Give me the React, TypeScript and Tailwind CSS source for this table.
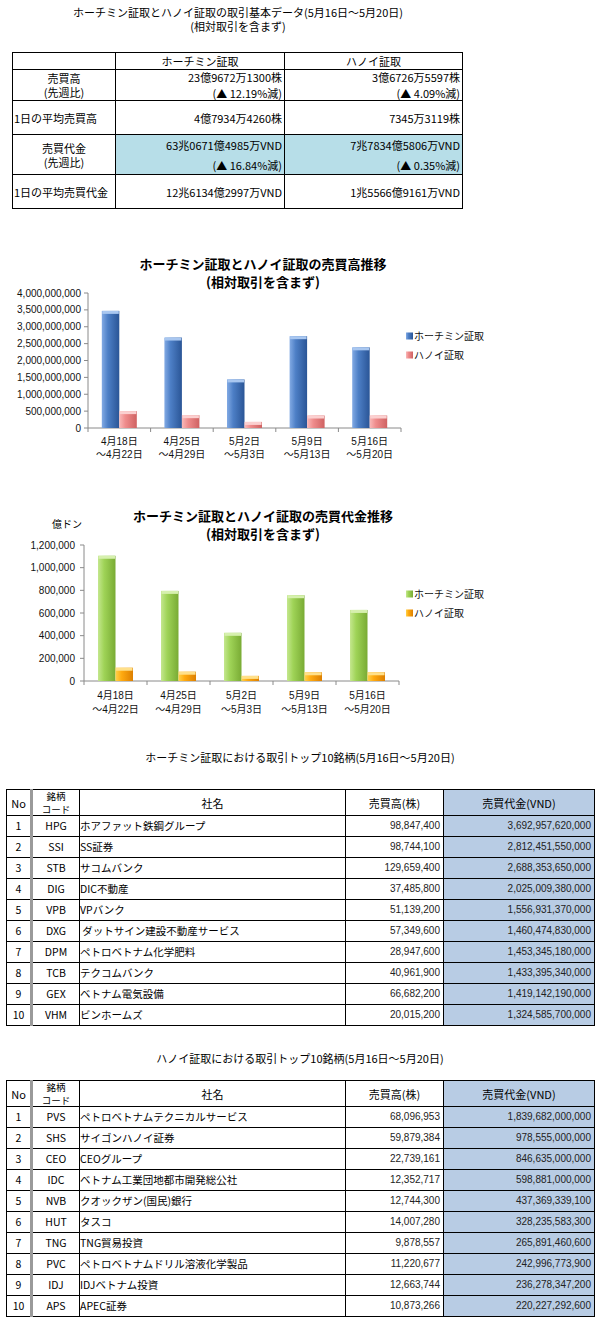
import React from 'react';

const cats = [
  ['4月18日', '～4月22日'],
  ['4月25日', '～4月29日'],
  ['5月2日', '～5月3日'],
  ['5月9日', '～5月13日'],
  ['5月16日', '～5月20日'],
];

const hcm = [
  ['1', 'HPG', 'ホアファット鉄鋼グループ', '98,847,400', '3,692,957,620,000'],
  ['2', 'SSI', 'SS証券', '98,744,100', '2,812,451,550,000'],
  ['3', 'STB', 'サコムバンク', '129,659,400', '2,688,353,650,000'],
  ['4', 'DIG', 'DIC不動産', '37,485,800', '2,025,009,380,000'],
  ['5', 'VPB', 'VPバンク', '51,139,200', '1,556,931,370,000'],
  ['6', 'DXG', '\u00a0ダットサイン建設不動産サービス', '57,349,600', '1,460,474,830,000'],
  ['7', 'DPM', 'ペトロベトナム化学肥料', '28,947,600', '1,453,345,180,000'],
  ['8', 'TCB', 'テクコムバンク', '40,961,900', '1,433,395,340,000'],
  ['9', 'GEX', 'ベトナム電気設備', '66,682,200', '1,419,142,190,000'],
  ['10', 'VHM', 'ビンホームズ', '20,015,200', '1,324,585,700,000'],
];

const hnx = [
  ['1', 'PVS', 'ペトロベトナムテクニカルサービス', '68,096,953', '1,839,682,000,000'],
  ['2', 'SHS', 'サイゴンハノイ証券', '59,879,384', '978,555,000,000'],
  ['3', 'CEO', 'CEOグループ', '22,739,161', '846,635,000,000'],
  ['4', 'IDC', 'ベトナム工業団地都市開発総公社', '12,352,717', '598,881,000,000'],
  ['5', 'NVB', 'クオックザン(国民)銀行', '12,744,300', '437,369,339,100'],
  ['6', 'HUT', 'タスコ', '14,007,280', '328,235,583,300'],
  ['7', 'TNG', 'TNG貿易投資', '9,878,557', '265,891,460,600'],
  ['8', 'PVC', 'ペトロベトナムドリル溶液化学製品', '11,220,677', '242,996,773,900'],
  ['9', 'IDJ', 'IDJベトナム投資', '12,663,744', '236,278,347,200'],
  ['10', 'APS', 'APEC証券', '10,873,266', '220,227,292,600'],
];

type Grad = { id: string; stops: string[]; cap: string };

const blue: Grad = { id: 'gb', stops: ['#82aae4', '#4d7fc6', '#2a5596'], cap: '#a9c7f0' };
const pink: Grad = { id: 'gp', stops: ['#f9b9b9', '#ef8c8c', '#cf6262'], cap: '#fbd0d0' };
const green: Grad = { id: 'gg', stops: ['#c4e78e', '#9fd357', '#79ab34'], cap: '#d6f0ae' };
const orange: Grad = { id: 'go', stops: ['#ffd24a', '#ffaa10', '#dd7f00'], cap: '#ffe08a' };

function Defs({ g }: { g: Grad }) {
  return (
    <linearGradient id={g.id} x1="0" y1="0" x2="1" y2="0">
      <stop offset="0" stopColor={g.stops[0]} />
      <stop offset="0.35" stopColor={g.stops[1]} />
      <stop offset="1" stopColor={g.stops[2]} />
    </linearGradient>
  );
}

function Bar({ x, y, w, h, g }: { x: number; y: number; w: number; h: number; g: Grad }) {
  return (
    <g>
      <rect x={x} y={y} width={w} height={h} fill={`url(#${g.id})`} />
      <rect x={x + 0.5} y={y} width={w - 1} height={Math.min(3, h)} fill={g.cap} />
    </g>
  );
}

type ChartProps = {
  height: number;
  axisX: number;
  right: number;
  top: number;
  base: number;
  max: number;
  ticks: string[];
  labelX: number;
  a: number[];
  b: number[];
  ga: Grad;
  gb: Grad;
  legendY: [number, number];
  catY: [number, number];
};

function Chart(p: ChartProps) {
  const gw = (p.right - p.axisX) / 5;
  const sc = (p.base - p.top) / p.max;
  const step = (p.base - p.top) / (p.ticks.length - 1);
  return (
    <svg width={600} height={p.height} className="block overflow-visible font-['Liberation_Sans','Noto_Sans_CJK_JP',sans-serif]">
      <defs>
        <Defs g={p.ga} />
        <Defs g={p.gb} />
      </defs>
      <line x1={p.axisX} y1={p.top} x2={p.axisX} y2={p.base} stroke="#8a8a8a" />
      <line x1={p.axisX} y1={p.base} x2={p.right} y2={p.base} stroke="#8a8a8a" />
      {p.ticks.map((t, i) => {
        const y = p.base - step * i;
        return (
          <g key={t}>
            <line x1={p.axisX - 4} y1={y} x2={p.axisX} y2={y} stroke="#8a8a8a" />
            <text x={p.labelX} y={y + 3.5} fontSize={10} textAnchor="end" fill="#111">
              {p.ticks[i]}
            </text>
          </g>
        );
      })}
      {[0, 1, 2, 3, 4, 5].map((i) => (
        <line key={i} x1={p.axisX + gw * i} y1={p.base} x2={p.axisX + gw * i} y2={p.base + 4} stroke="#8a8a8a" />
      ))}
      {p.a.map((v, i) => {
        const c = p.axisX + gw * (i + 0.5);
        const ha = v * sc;
        const hb = p.b[i] * sc;
        return (
          <g key={i}>
            <Bar x={c - 17.5} y={p.base - ha} w={17.5} h={ha} g={p.ga} />
            <Bar x={c} y={p.base - hb} w={17.5} h={hb} g={p.gb} />
            <text x={c} y={p.catY[0] + 4} fontSize={10} textAnchor="middle" fill="#111">
              {cats[i][0]}
            </text>
            <text x={c} y={p.catY[1] + 4} fontSize={10} textAnchor="middle" fill="#111">
              {cats[i][1]}
            </text>
          </g>
        );
      })}
      <rect x={406} y={p.legendY[0] - 3.5} width={7} height={7} fill={`url(#${p.ga.id})`} />
      <text x={414} y={p.legendY[0] + 4} fontSize={10} fill="#111">ホーチミン証取</text>
      <rect x={406} y={p.legendY[1] - 3.5} width={7} height={7} fill={`url(#${p.gb.id})`} />
      <text x={414} y={p.legendY[1] + 4} fontSize={10} fill="#111">ハノイ証取</text>
    </svg>
  );
}

function TopTable({ rows }: { rows: string[][] }) {
  const cell = 'border border-black px-[3px]';
  return (
    <table className="ml-[6px] table-fixed border-collapse text-[10.5px] leading-[12px]">
      <colgroup>
        <col className="w-[25px]" />
        <col className="w-[48px]" />
        <col className="w-[266px]" />
        <col className="w-[98px]" />
        <col className="w-[151px]" />
      </colgroup>
      <tbody>
        <tr className="h-[26px] text-[11px]">
          <td className={`${cell} border-r-[3px] border-r-[#9a9a9a] text-center`}>No</td>
          <td className={`${cell} py-0 text-center text-[9.5px] leading-[12.5px]`}>
            <div>銘柄</div>
            <div>コード</div>
          </td>
          <td className={`${cell} text-center`}>社名</td>
          <td className={`${cell} text-center`}>売買高(株)</td>
          <td className={`${cell} bg-[#b8cce4] text-center`}>売買代金(VND)</td>
        </tr>
        {rows.map((r) => (
          <tr key={r[0]} className="h-[21px]">
            <td className={`${cell} border-r-[3px] border-r-[#9a9a9a] text-center`}>{r[0]}</td>
            <td className={`${cell} text-center`}>{r[1]}</td>
            <td className={`${cell} !px-0 whitespace-nowrap`}>{r[2]}</td>
            <td className={`${cell} text-right font-['Liberation_Sans',sans-serif] text-[10px] text-[#222]`}>{r[3]}</td>
            <td className={`${cell} bg-[#b8cce4] text-right font-['Liberation_Sans',sans-serif] text-[10px] text-[#222]`}>{r[4]}</td>
          </tr>
        ))}
      </tbody>
    </table>
  );
}

export default function App() {
  const c = 'border border-black';
  return (
    <div className="w-[600px] bg-white pb-[25px] text-black font-['Noto_Sans_CJK_JP',sans-serif]">
      <div className="w-[476px] pt-[5px] text-center text-[11px] leading-[14px]">
        <div>ホーチミン証取とハノイ証取の取引基本データ(5月16日～5月20日)</div>
        <div>(相対取引を含まず)</div>
      </div>

      <table className="mt-[19px] ml-[12px] table-fixed border-collapse text-[11px] leading-[14px]">
        <colgroup>
          <col className="w-[103px]" />
          <col className="w-[169px]" />
          <col className="w-[178px]" />
        </colgroup>
        <tbody>
          <tr className="h-[17px]">
            <td className={c}></td>
            <td className={`${c} text-center`}>ホーチミン証取</td>
            <td className={`${c} text-center`}>ハノイ証取</td>
          </tr>
          <tr className="h-[31px]">
            <td className={`${c} text-center`}>
              <div>売買高</div>
              <div>(先週比)</div>
            </td>
            <td className={`${c} pr-[2px] text-right`}>
              <div>23億9672万1300株</div>
              <div className="mt-[2px]">(▲ 12.19%減)</div>
            </td>
            <td className={`${c} pr-[2px] text-right`}>
              <div>3億6726万5597株</div>
              <div className="mt-[2px]">(▲ 4.09%減)</div>
            </td>
          </tr>
          <tr className="h-[34px]">
            <td className={`${c} pl-[1px]`}>1日の平均売買高</td>
            <td className={`${c} pr-[2px] text-right`}>4億7934万4260株</td>
            <td className={`${c} pr-[2px] text-right`}>7345万3119株</td>
          </tr>
          <tr className="h-[40px]">
            <td className={`${c} text-center`}>
              <div>売買代金</div>
              <div>(先週比)</div>
            </td>
            <td className={`${c} bg-[#b7dee8] pr-[2px] text-right`}>
              <div>63兆0671億4985万VND</div>
              <div className="mt-[6px]">(▲ 16.84%減)</div>
            </td>
            <td className={`${c} bg-[#b7dee8] pr-[2px] text-right`}>
              <div>7兆7834億5806万VND</div>
              <div className="mt-[6px]">(▲ 0.35%減)</div>
            </td>
          </tr>
          <tr className="h-[34px]">
            <td className={`${c} pl-[1px]`}>1日の平均売買代金</td>
            <td className={`${c} pr-[2px] text-right`}>12兆6134億2997万VND</td>
            <td className={`${c} pr-[2px] text-right`}>1兆5566億9161万VND</td>
          </tr>
        </tbody>
      </table>

      <div className="mt-[46px] w-[526px] text-center text-[13px] font-bold leading-[18px]">
        <div>ホーチミン証取とハノイ証取の売買高推移</div>
        <div>(相対取引を含まず)</div>
      </div>
      <Chart
        height={170}
        axisX={88}
        right={401}
        top={2}
        base={137}
        max={4}
        ticks={['0', '500,000,000', '1,000,000,000', '1,500,000,000', '2,000,000,000', '2,500,000,000', '3,000,000,000', '3,500,000,000', '4,000,000,000']}
        labelX={81}
        a={[3.47, 2.68, 1.44, 2.72, 2.39]}
        b={[0.5, 0.38, 0.18, 0.37, 0.37]}
        ga={blue}
        gb={pink}
        legendY={[45, 64]}
        catY={[150, 163]}
      />

      <div className="mt-[46px] flex">
        <div className="ml-[52px] w-[30px] pt-[11px] text-[10px] leading-[14px] font-['Liberation_Sans','Noto_Sans_CJK_JP',sans-serif]">億ドン</div>
        <div className="w-[362px] text-center text-[13px] font-bold leading-[18px]">
          <div>ホーチミン証取とハノイ証取の売買代金推移</div>
          <div>(相対取引を含まず)</div>
        </div>
      </div>
      <Chart
        height={172}
        axisX={84}
        right={399}
        top={2}
        base={138}
        max={1200}
        ticks={['0', '200,000', '400,000', '600,000', '800,000', '1,000,000', '1,200,000']}
        labelX={75}
        a={[1105, 795, 425, 757, 627]}
        b={[117, 82, 45, 77, 77]}
        ga={green}
        gb={orange}
        legendY={[51, 70]}
        catY={[152, 166]}
      />

      <div className="mt-[35px] text-center text-[11px] leading-[14px]">
        ホーチミン証取における取引トップ10銘柄(5月16日～5月20日)
      </div>
      <div className="mt-[25px]">
        <TopTable rows={hcm} />
      </div>

      <div className="mt-[25px] text-center text-[11px] leading-[14px]">
        ハノイ証取における取引トップ10銘柄(5月16日～5月20日)
      </div>
      <div className="mt-[15px]">
        <TopTable rows={hnx} />
      </div>
    </div>
  );
}
